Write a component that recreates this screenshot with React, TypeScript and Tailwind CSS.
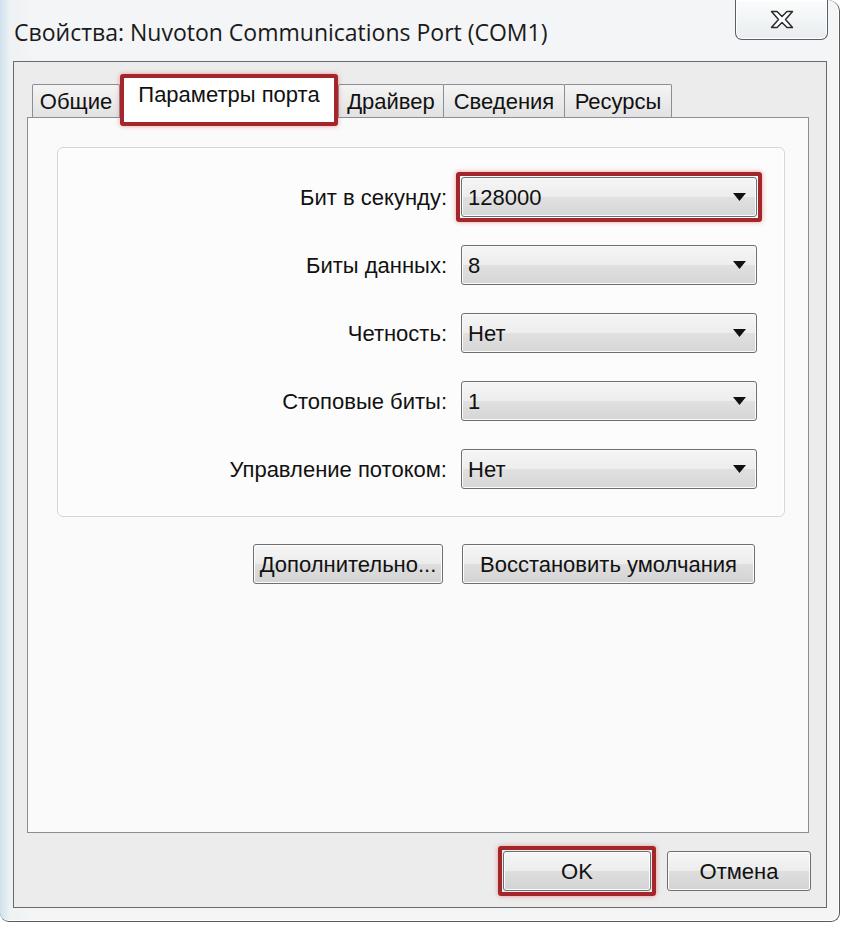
import React from "react";

const FONT = { fontFamily: '"Liberation Sans", Arial, sans-serif' };

const rows = [
  { label: "Бит в секунду:", value: "128000", marked: true },
  { label: "Биты данных:", value: "8" },
  { label: "Четность:", value: "Нет" },
  { label: "Стоповые биты:", value: "1" },
  { label: "Управление потоком:", value: "Нет" },
];

const tabClass =
  "h-[33px] flex items-center justify-center border border-b-0 border-[#8b8e96] bg-[linear-gradient(to_bottom,#f4f4f4,#e2e2e2)] text-[22px] text-[#111] rounded-t-[2px]";

const buttonClass =
  "h-[40px] flex items-center justify-center border border-[#6f6f6f] rounded-[3px] bg-[linear-gradient(to_bottom,#f6f6f6_0%,#ececec_50%,#dedede_51%,#d3d3d3_100%)] shadow-[inset_0_0_0_1px_#fcfcfc] text-[22px] text-[#111]";

function Combo({ value }: { value: string }) {
  return (
    <div className="w-[296px] h-[40px] flex items-center justify-between pl-[6px] pr-[10px] border border-[#6f6f6f] rounded-[3px] bg-[linear-gradient(to_bottom,#f5f5f5_0%,#ededed_50%,#e0e0e0_51%,#d6d6d6_100%)] shadow-[inset_0_0_0_1px_#fafafa]">
      <span className="text-[22px] text-[#111]">{value}</span>
      <svg width="13" height="8" viewBox="0 0 13 8">
        <path d="M0 0 H13 L6.5 8 Z" fill="#111" />
      </svg>
    </div>
  );
}

export default function App() {
  return (
    <div className="w-[842px] h-[926px] bg-white" style={FONT}>
      <div className="w-[840px] h-[922px] flex flex-col border-r border-b border-[#5b5b5b] rounded-tr-[12px] rounded-b-[9px] bg-[linear-gradient(to_right,#cfe1ec_0px,#eef2f4_10px,#f4f5f6_40px)] shadow-[inset_-1px_-1px_0_#ffffff]">
        {/* TITLE BAR */}
        <div className="h-[61px] flex items-start">
          <div
            className="flex-1 pt-[18px] pl-[14px] text-[23px] leading-[28px] text-[#1a1a1a]"
            style={{ fontFamily: '"Open Sans", "Noto Sans", sans-serif' }}
          >
            Свойства: Nuvoton Communications Port (COM1)
          </div>
          <div className="w-[93px] h-[40px] mr-[11px] flex items-center justify-center border border-t-0 border-[#56606b] rounded-b-[7px] bg-[linear-gradient(to_bottom,#fbfcfc,#e9edf0)] shadow-[inset_0_0_0_1px_#ffffff]">
            <svg width="26" height="19" viewBox="0 0 26 19">
              <polygon
                points="2.5,1.5 8,1.5 13,6.5 18,1.5 23.5,1.5 16.5,9.5 23.5,17.5 18,17.5 13,12.5 8,17.5 2.5,17.5 9.5,9.5"
                fill="#ffffff"
                stroke="#2b2b2b"
                strokeWidth="1.5"
                strokeLinejoin="round"
              />
            </svg>
          </div>
        </div>

        {/* CLIENT */}
        <div className="ml-[13px] mr-[12px] h-[847px] flex flex-col border border-[#6a6a6a] bg-[#ececec]">
          {/* TABS */}
          <div className="mt-[12px] pl-[18px] h-[43px] flex items-end">
            <div className={`${tabClass} w-[88px]`}>Общие</div>
            <div className="relative z-10 w-[218px] h-[52px] -mb-[9px] border-4 border-[#a3262b] rounded-[3px] shadow-[0_0_5px_rgba(220,80,80,0.55)] bg-white">
              <div className="h-full flex justify-center pt-[4px] text-[22px] leading-[26px] text-[#111]">
                Параметры порта
              </div>
            </div>
            <div className={`${tabClass} w-[106px]`}>Драйвер</div>
            <div className={`${tabClass} w-[122px] -ml-px`}>Сведения</div>
            <div className={`${tabClass} w-[108px] -ml-px`}>Ресурсы</div>
          </div>

          {/* PANEL */}
          <div className="ml-[13px] mr-[17px] h-[716px] border border-[#8b8e96] bg-[#fafafa]">
            <div className="mt-[29px] ml-[29px] w-[728px] h-[370px] border border-[#d6d6d6] rounded-[6px] bg-[#fcfcfc] shadow-[inset_0_0_0_1px_#ffffff] flex flex-col gap-[28px] pt-[29px]">
              {rows.map((row) => (
                <div key={row.label} className="h-[40px] flex items-center">
                  <div className="w-[389px] text-right text-[22px] text-[#111]">
                    {row.label}
                  </div>
                  <div className="relative ml-[14px]">
                    <Combo value={row.value} />
                    {row.marked && (
                      <div className="absolute -inset-[5px] border-4 border-[#a3262b] rounded-[3px] shadow-[0_0_5px_rgba(220,80,80,0.55)]" />
                    )}
                  </div>
                </div>
              ))}
            </div>

            <div className="mt-[27px] ml-[225px] flex gap-[19px]">
              <div className={`${buttonClass} w-[190px]`}>Дополнительно...</div>
              <div className={`${buttonClass} w-[293px]`}>Восстановить умолчания</div>
            </div>
          </div>

          {/* BOTTOM BUTTONS */}
          <div className="mt-[18px] pr-[15px] flex justify-end gap-[16px]">
            <div className="relative">
              <div className={`${buttonClass} w-[148px]`}>OK</div>
              <div className="absolute -inset-[5px] border-4 border-[#a3262b] rounded-[3px] shadow-[0_0_5px_rgba(220,80,80,0.55)]" />
            </div>
            <div className={`${buttonClass} w-[144px]`}>Отмена</div>
          </div>
        </div>
      </div>
    </div>
  );
}
